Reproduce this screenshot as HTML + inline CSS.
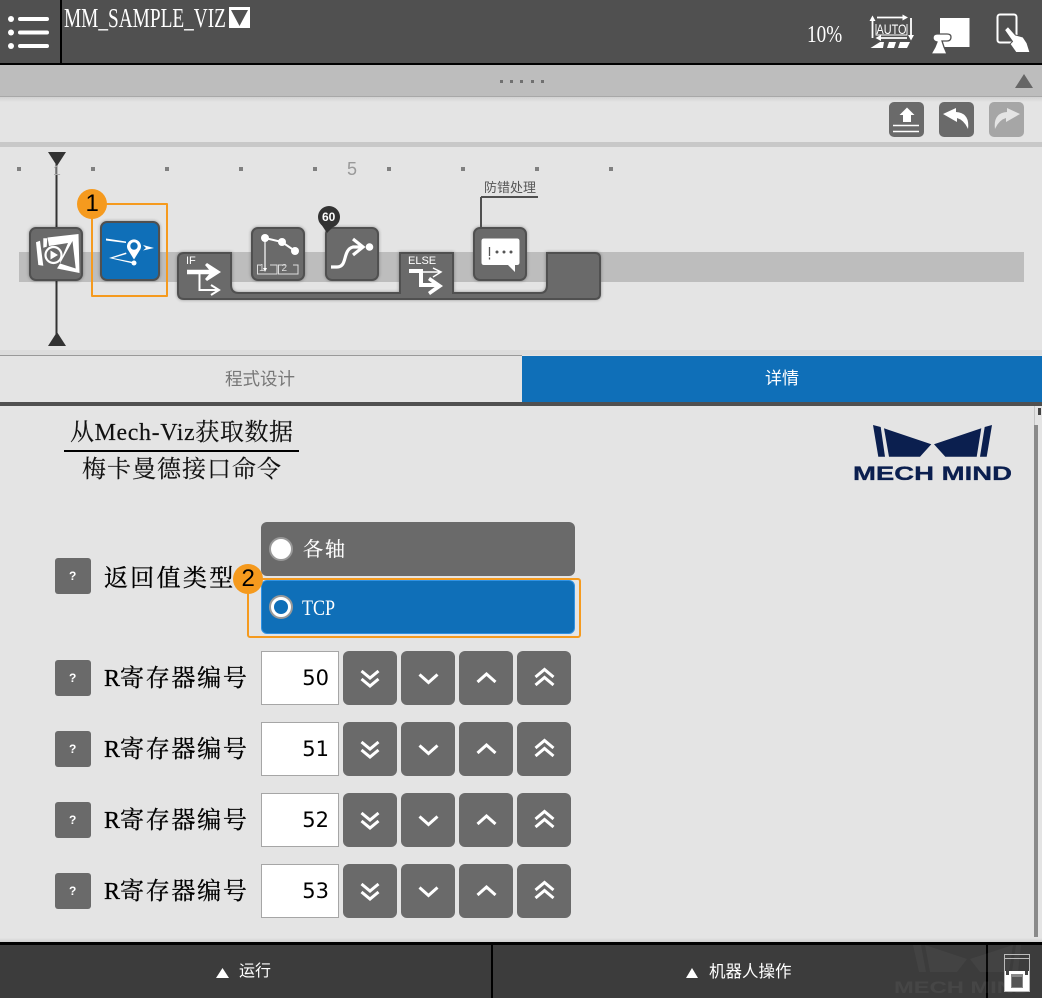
<!DOCTYPE html>
<html><head><meta charset="utf-8"><style>
html,body{margin:0;padding:0;background:#e4e4e4}
#p{position:relative;width:1042px;height:998px;overflow:hidden;background:#e4e4e4}
#p>div{position:absolute}
svg{position:absolute;left:0;top:0}
.t{position:absolute;white-space:nowrap;font-family:"Liberation Serif","Noto Serif CJK SC",serif;color:#000}
.s{font-family:"Liberation Sans","Noto Sans CJK SC",sans-serif}
.lab{left:104px;font-size:24px;letter-spacing:1.7px;line-height:36px;height:36px;-webkit-text-stroke:.3px #000}
.r{letter-spacing:0}
.n{left:262px;width:67px;text-align:right;font-family:"DejaVu Sans",sans-serif;font-size:21px;line-height:54px;color:#000}
.tile{filter:drop-shadow(0 0 1.5px rgba(0,0,0,.35))}
</style></head><body><div id="p">
<div style="left:0;top:0;width:1042px;height:63px;background:#505050"></div>
<div style="left:0;top:63px;width:1042px;height:2px;background:#000"></div>
<div style="left:60px;top:0;width:2px;height:63px;background:#000"></div>
<div style="left:0;top:65px;width:1042px;height:31px;background:#bdbdbd"></div>
<div style="left:0;top:96px;width:1042px;height:1px;background:#a8a8a8"></div>
<div style="left:0;top:97px;width:1042px;height:5px;background:linear-gradient(#d2d2d2,#e4e4e4)"></div>
<div style="left:0;top:142px;width:1042px;height:5px;background:#c8c8c8"></div>
<div style="left:0;top:350px;width:1042px;height:5px;background:#dcdcdc"></div>
<div style="left:0;top:355px;width:522px;height:1px;background:#999"></div>
<div style="left:522px;top:356px;width:520px;height:46px;background:#0f6fb8"></div>
<div style="left:0;top:402px;width:1042px;height:4px;background:#505050"></div>
<div style="left:0;top:938px;width:1042px;height:4px;background:linear-gradient(#e4e4e4,#d0d0d0)"></div>
<div style="left:0;top:942px;width:1042px;height:3px;background:#000"></div>
<div style="left:0;top:945px;width:1042px;height:53px;background:#3c3c3c"></div>
<div style="left:491px;top:945px;width:2px;height:53px;background:#000"></div>
<div style="left:986px;top:945px;width:2px;height:53px;background:#000"></div>
<div style="left:1034px;top:425px;width:4px;height:512px;background:#8a8a8a"></div>
<div style="left:1034px;top:406px;width:1px;height:19px;background:#c4c4c4"></div>
<div style="left:1038px;top:408px;width:3px;height:7px;background:#444"></div>

<div style="left:261px;top:522px;width:314px;height:54px;background:#6a6a6a;border-radius:6px"></div>
<div style="left:261px;top:580px;width:312px;height:52px;background:#0f6fb8;border:1px solid #2f92e4;border-radius:6px"></div>
<div style="left:247px;top:578px;width:330px;height:56px;border:2px solid #f59a1e;border-radius:3px;border-top-left-radius:0"></div>

<svg width="1042" height="998" viewBox="0 0 1042 998">
<!-- hamburger -->
<g fill="#fff"><circle cx="11" cy="19" r="3"/><circle cx="11" cy="32.500" r="3"/><circle cx="11" cy="46" r="3"/></g>
<g stroke="#fff" stroke-width="4" stroke-linecap="round"><path d="M20 19H47M20 32.500H47M20 46H47"/></g>
<rect x="229" y="7" width="21" height="21" fill="#fff"/><path d="M231 10H248L239.500 26Z" fill="#505050"/>
<!-- auto icon -->
<g stroke="#fff" stroke-width="1.800" fill="none"><path d="M872.500 20V38M877 17.500H904M911 18V36M878 38H907"/></g>
<path d="M876 24V35H907V24" stroke="#fff" stroke-width="0.900" fill="none"/>
<g fill="#fff"><path d="M872.500 15.500L869.500 21H875.500ZM908 17.500L902.500 14.500V20.500ZM911 40.500L908 35H914ZM875.500 38L881 35V41Z"/><path d="M870.500 48L880 42H884L883 48ZM887 48L889 42H896L894 48ZM898 48L900 42H910L907 48Z"/></g>
<text x="876.500" y="34" font-family="Liberation Sans" font-size="14" fill="#fff" textLength="30" lengthAdjust="spacingAndGlyphs">AUTO</text>
<!-- robot + square -->
<rect x="940" y="18" width="29.500" height="29" fill="#fff"/>
<path d="M933 38Q933 34 937 34H947Q951 34 951 37Q951 41 947 41H942L944 47L947 54H931L935 47L937 42Q933 41 933 38Z" fill="#fff" stroke="#505050" stroke-width="1.300"/>
<!-- tablet -->
<rect x="997.500" y="14.500" width="19" height="28" rx="2.500" fill="none" stroke="#fff" stroke-width="2"/>
<path d="M1004.500 30L1008 26.500L1015.500 35L1023 37L1027 43L1030 52.500L1016 52.500L1010 44L1012.500 41.500Z" fill="#fff" stroke="#505050" stroke-width="1"/>
<!-- band -->
<g fill="#707070"><rect x="500" y="80" width="3" height="3"/><rect x="510" y="80" width="3" height="3"/><rect x="520" y="80" width="3" height="3"/><rect x="531" y="80" width="3" height="3"/><rect x="541" y="80" width="3" height="3"/></g>
<path d="M1015 88L1024 74L1033 88Z" fill="#666"/>
<!-- toolbar -->
<rect x="889" y="102" width="35" height="35" rx="5" fill="#6a6a6a"/>
<path d="M907 107.500L914.500 115H911V122H903V115H899.500Z" fill="#fff"/><path d="M893 125.500H919M893 131.500H919" stroke="#fff" stroke-width="1.400"/>
<rect x="939" y="102" width="35" height="35" rx="5" fill="#6a6a6a"/>
<path d="M943 114L956 108V112Q970 113 968 129Q964 120 957 118V122Z" fill="#fff"/>
<rect x="989" y="102" width="35" height="35" rx="5" fill="#a6a6a6"/>
<path d="M1020 114L1007 108V112Q993 113 995 129Q999 120 1006 118V122Z" fill="#e4e4e4"/>
<!-- timeline -->
<rect x="19" y="252" width="1005" height="30" fill="#bdbdbd"/>
<g fill="#808080"><rect x="17" y="167" width="4" height="4"/><rect x="91" y="167" width="4" height="4"/><rect x="165" y="167" width="4" height="4"/><rect x="239" y="167" width="4" height="4"/><rect x="313" y="167" width="4" height="4"/><rect x="387" y="167" width="4" height="4"/><rect x="461" y="167" width="4" height="4"/><rect x="535" y="167" width="4" height="4"/><rect x="609" y="167" width="4" height="4"/></g>
<path d="M56.500 160V340" stroke="#333" stroke-width="2"/>
<path d="M48 152H66L57 166Z" fill="#333"/><path d="M48 346H66L57 332Z" fill="#333"/>
<!-- branch -->
<path class="tile" d="M184 253H231V285Q231 293 239 293H400V253H453V293H540Q547 293 547 285V253H595Q600 253 600 258V294Q600 299 595 299H184Q178 299 178 293V259Q178 253 184 253Z" fill="#6a6a6a" stroke="#505050" stroke-width="2"/>
<!-- tile boxes -->
<g class="tile" fill="#6a6a6a" stroke="#505050" stroke-width="2"><rect x="30" y="228" width="52" height="52" rx="6"/><rect x="252" y="228" width="52" height="52" rx="6"/><rect x="326" y="228" width="52" height="52" rx="6"/><rect x="474" y="228" width="52" height="52" rx="6"/></g>
<rect class="tile" x="101" y="222" width="58" height="58" rx="6" fill="#0f6fb8" stroke="#505050" stroke-width="2"/>
<!-- tile 1 -->
<path d="M36 242.300L40 240.700L43.300 265.700L38.300 265ZM43.300 238.300L47.300 238.300L46.700 246.700L43.300 247.700Z" fill="#fff"/>
<path d="M47.500 237.500L78.500 234L79.500 273L57 268.500L60 263.500L75.700 268.500L72.500 241L60 263.500L60 262L68 243L49 246Z" fill="#fff"/>
<circle cx="53.500" cy="255" r="8" fill="#6a6a6a" stroke="#fff" stroke-width="2.200"/><path d="M50.500 250.500L58 255L50.500 259.500Z" fill="#fff"/>
<!-- tile 2 -->
<path d="M106 238.500L126 241.500V243L106 240.500ZM143 245L154 248L143 250.500L146 248ZM126 252.500L109 258L133 263.500L133 262L113 258L126.500 254Z" fill="#fff"/>
<circle cx="134" cy="263" r="2.500" fill="#fff"/>
<path d="M134 259.500L127.500 249A7 7 0 1 1 140.500 249Z" fill="#fff"/><circle cx="134" cy="246" r="3.700" fill="#0f6fb8"/>
<!-- orange 1 -->
<path d="M92 204H167V296H92Z" fill="none" stroke="#f59a1e" stroke-width="2" stroke-linejoin="round"/>
<circle cx="92" cy="204" r="15" fill="#f59a1e"/>
<!-- if -->
<path d="M187 272H214" stroke="#fff" stroke-width="4.500"/><path d="M207 263L221 272L207 281L205 279L211 272L205 265Z" fill="#fff"/>
<path d="M199.500 274V290H217" stroke="#fff" stroke-width="2" fill="none"/><path d="M211 285L219 290L211 295" stroke="#fff" stroke-width="2" fill="none"/>
<!-- path tile -->
<path d="M265 238L282 242L295 251" stroke="#fff" stroke-width="2" fill="none"/><circle cx="265" cy="238" r="4" fill="#fff"/><circle cx="282" cy="242" r="4" fill="#fff"/><circle cx="295" cy="251" r="4" fill="#fff"/>
<path d="M265 240V268" stroke="#fff" stroke-width="1.200"/><path d="M263 268H267L265 272Z" fill="#fff"/>
<path d="M261 265H257.500V274H277V265H270M286 265H278.500V274H298V265H293" stroke="#ddd" stroke-width="1" fill="none"/>
<!-- curve -->
<circle cx="329" cy="217" r="11" fill="#333"/><path d="M321 224L327 233L334 226Z" fill="#333"/>
<path d="M331 267H337C348 267 342 250 353 247H362" stroke="#fff" stroke-width="3.200" fill="none"/>
<path d="M353 239L363 247L353 255" stroke="#fff" stroke-width="3.200" fill="none"/><circle cx="369.500" cy="247" r="3.800" fill="#fff"/>
<!-- else -->
<path d="M409 271H421V285H436" stroke="#fff" stroke-width="4" fill="none"/><path d="M430 277L443 286L430 295L428 292L436 286L428 280Z" fill="#fff"/>
<path d="M421 272H440M433 268L441 272L433 277" stroke="#fff" stroke-width="1.500" fill="none"/>
<!-- dialog -->
<path d="M481 197V228M481 197H538" stroke="#505050" stroke-width="2" fill="none"/>
<path d="M484 238.500H517Q519.500 238.500 519.500 241V262.500Q519.500 265 517 265H515V272L508 265H484Q481.500 265 481.500 262.500V241Q481.500 238.500 484 238.500Z" fill="#fff"/>
<path d="M489.500 247V256M489.500 257.500V259.500" stroke="#555" stroke-width="1.300"/>
<g fill="#555"><circle cx="497" cy="252" r="1.500"/><circle cx="504" cy="252" r="1.500"/><circle cx="511" cy="252" r="1.500"/></g>
<!-- logo -->
<g fill="#0b1f4f"><path d="M873 425L880.700 427L885 456.700H878.300ZM884 428.300L931.300 444.300L920 456.700H889ZM934 444.300L981.300 428.300L976.700 456.700H945.300ZM984.700 427L992 425L986.700 456.700H980Z"/></g>
<text x="853" y="480" font-family="Liberation Sans" font-weight="700" font-size="19.500" fill="#0b1f4f" stroke="#0b1f4f" stroke-width=".3" textLength="159" lengthAdjust="spacingAndGlyphs">MECH MIND</text>
<!-- watermark -->
<g fill="#fff" opacity="0.04"><path d="M913 945L921 945L926 972H919ZM925 945L967 959L957 972H930ZM970 959L1013 945L1009 972H980ZM1016 945L1021 945L1018 972H1012Z"/></g>
<text x="894" y="993" font-family="Liberation Sans" font-weight="700" font-size="17" fill="#fff" opacity="0.05" textLength="137" lengthAdjust="spacingAndGlyphs">MECH MIND</text>
<!-- radio -->
<circle cx="281" cy="549" r="11" fill="#fff" stroke="#999" stroke-width="2"/>
<circle cx="281" cy="607" r="11" fill="#fff" stroke="#999" stroke-width="2"/><circle cx="281" cy="607" r="7" fill="#0f6fb8"/>
<circle cx="248" cy="579" r="15" fill="#f59a1e"/>
<!-- ? -->
<g fill="#6a6a6a"><rect x="55" y="558" width="36" height="36" rx="3"/><rect x="55" y="660" width="36" height="36" rx="3"/><rect x="55" y="731" width="36" height="36" rx="3"/><rect x="55" y="802" width="36" height="36" rx="3"/><rect x="55" y="873" width="36" height="36" rx="3"/></g>
<!-- spinners -->
<g fill="#fff" stroke="#a6a6a6"><rect x="261.500" y="651.500" width="77" height="53"/><rect x="261.500" y="722.500" width="77" height="53"/><rect x="261.500" y="793.500" width="77" height="53"/><rect x="261.500" y="864.500" width="77" height="53"/></g>
<g id="row"><rect x="343" y="651" width="54" height="54" rx="6" fill="#6a6a6a"/><rect x="401" y="651" width="54" height="54" rx="6" fill="#6a6a6a"/><rect x="459" y="651" width="54" height="54" rx="6" fill="#6a6a6a"/><rect x="517" y="651" width="54" height="54" rx="6" fill="#6a6a6a"/><path d="M361.500 671L370 678L378.500 671M361.500 679L370 686L378.500 679M419.500 674.500L428.500 682.500L437.500 674.500M477.500 682L486.500 674L495.500 682M535.500 677L544.500 669.500L553.500 677M535.500 685L544.500 677.500L553.500 685" fill="none" stroke="#fff" stroke-width="3"/></g>
<use href="#row" y="71"/><use href="#row" y="142"/><use href="#row" y="213"/>
<!-- footer -->
<path d="M216 978L222.500 968L229 978ZM686 978L692 968L698 978Z" fill="#fff"/>
<g fill="none" stroke="#bbb" stroke-width="1"><rect x="1004.500" y="954.500" width="25" height="37"/><path d="M1005 958.500H1029"/></g>
<rect x="1005" y="971" width="24" height="20" fill="#fff"/><rect x="1006" y="971" width="3" height="4" fill="#444"/><rect x="1025" y="971" width="3" height="4" fill="#444"/>
<rect x="1011" y="974" width="12" height="14" fill="#888"/><rect x="1012" y="977" width="10" height="10" fill="#555"/>
</svg>

<span class="t" style="left:64px;top:4px;font-size:27px;line-height:28px;color:#fff;transform:scaleX(.715);transform-origin:top left">MM_SAMPLE_VIZ</span>
<span class="t" style="left:807px;top:22px;font-size:24px;line-height:26px;color:#fff;transform:scaleX(.8);transform-origin:top left">10%</span>
<span class="t" style="left:85.500px;top:192px;font-family:'Liberation Sans';font-size:24px;line-height:24px">1</span>
<span class="t" style="left:241.500px;top:567px;font-family:'Liberation Sans';font-size:24px;line-height:24px">2</span>
<span class="t" style="left:347px;top:158px;font-family:'Liberation Sans';font-size:18px;line-height:22px;color:#999">5</span>
<span class="t" style="left:53px;top:161px;font-family:'Liberation Sans';font-size:14px;line-height:18px;color:#aaa">1</span>
<span class="t s" style="left:186px;top:255px;font-size:11px;line-height:12px;color:#fff">IF</span>
<span class="t s" style="left:408px;top:255px;font-size:11px;line-height:12px;color:#fff">ELSE</span>
<span class="t s" style="left:322px;top:211px;font-size:12px;line-height:12px;font-weight:700;color:#fff">60</span>
<span class="t s" style="left:484px;top:180px;font-size:13px;line-height:15px;color:#555">防错处理</span>
<span class="t s" style="left:259px;top:264px;font-size:10px;line-height:10px;color:#ddd">1</span>
<span class="t s" style="left:281.500px;top:264px;font-size:10px;line-height:10px;color:#ddd">2</span>

<span class="t s" style="left:225px;top:368px;font-size:17.500px;line-height:22px;color:#777">程式设计</span>
<span class="t s" style="left:765px;top:368px;font-size:17px;line-height:22px;color:#fff">详情</span>

<span class="t" style="left:70px;top:418px;font-size:24px;line-height:30px;color:#111;letter-spacing:.6px;-webkit-text-stroke:.15px #111">从Mech-Viz获取数据</span>
<div style="left:64px;top:450px;width:235px;height:2px;background:#000"></div>
<span class="t" style="left:82px;top:455px;font-size:24px;letter-spacing:1px;line-height:30px;color:#111;-webkit-text-stroke:.15px #111">梅卡曼德接口命令</span>

<span class="t lab" style="top:561px;letter-spacing:2.300px">返回值类型</span>
<span class="t" style="left:303px;top:535px;font-size:20px;letter-spacing:2px;line-height:30px;color:#fff;-webkit-text-stroke:.2px #fff">各轴</span>
<span class="t" style="left:302px;top:594px;font-size:22px;line-height:28px;color:#fff;transform:scaleX(.82);transform-origin:top left">TCP</span>

<span class="t lab" style="top:661px"><span class="r">R</span>寄存器编号</span>
<span class="t lab" style="top:732px"><span class="r">R</span>寄存器编号</span>
<span class="t lab" style="top:803px"><span class="r">R</span>寄存器编号</span>
<span class="t lab" style="top:874px"><span class="r">R</span>寄存器编号</span>

<span class="t s" style="left:69px;top:568px;font-size:12px;font-weight:700;line-height:16px;color:#fff">?</span>
<span class="t s" style="left:69px;top:670px;font-size:12px;font-weight:700;line-height:16px;color:#fff">?</span>
<span class="t s" style="left:69px;top:741px;font-size:12px;font-weight:700;line-height:16px;color:#fff">?</span>
<span class="t s" style="left:69px;top:812px;font-size:12px;font-weight:700;line-height:16px;color:#fff">?</span>
<span class="t s" style="left:69px;top:883px;font-size:12px;font-weight:700;line-height:16px;color:#fff">?</span>

<span class="t n" style="top:651px">50</span>
<span class="t n" style="top:722px">51</span>
<span class="t n" style="top:793px">52</span>
<span class="t n" style="top:864px">53</span>

<span class="t s" style="left:239px;top:962px;font-size:16px;line-height:20px;color:#fff">运行</span>
<span class="t s" style="left:709px;top:962px;font-size:16.500px;line-height:20px;color:#fff">机器人操作</span>
</div></body></html>
